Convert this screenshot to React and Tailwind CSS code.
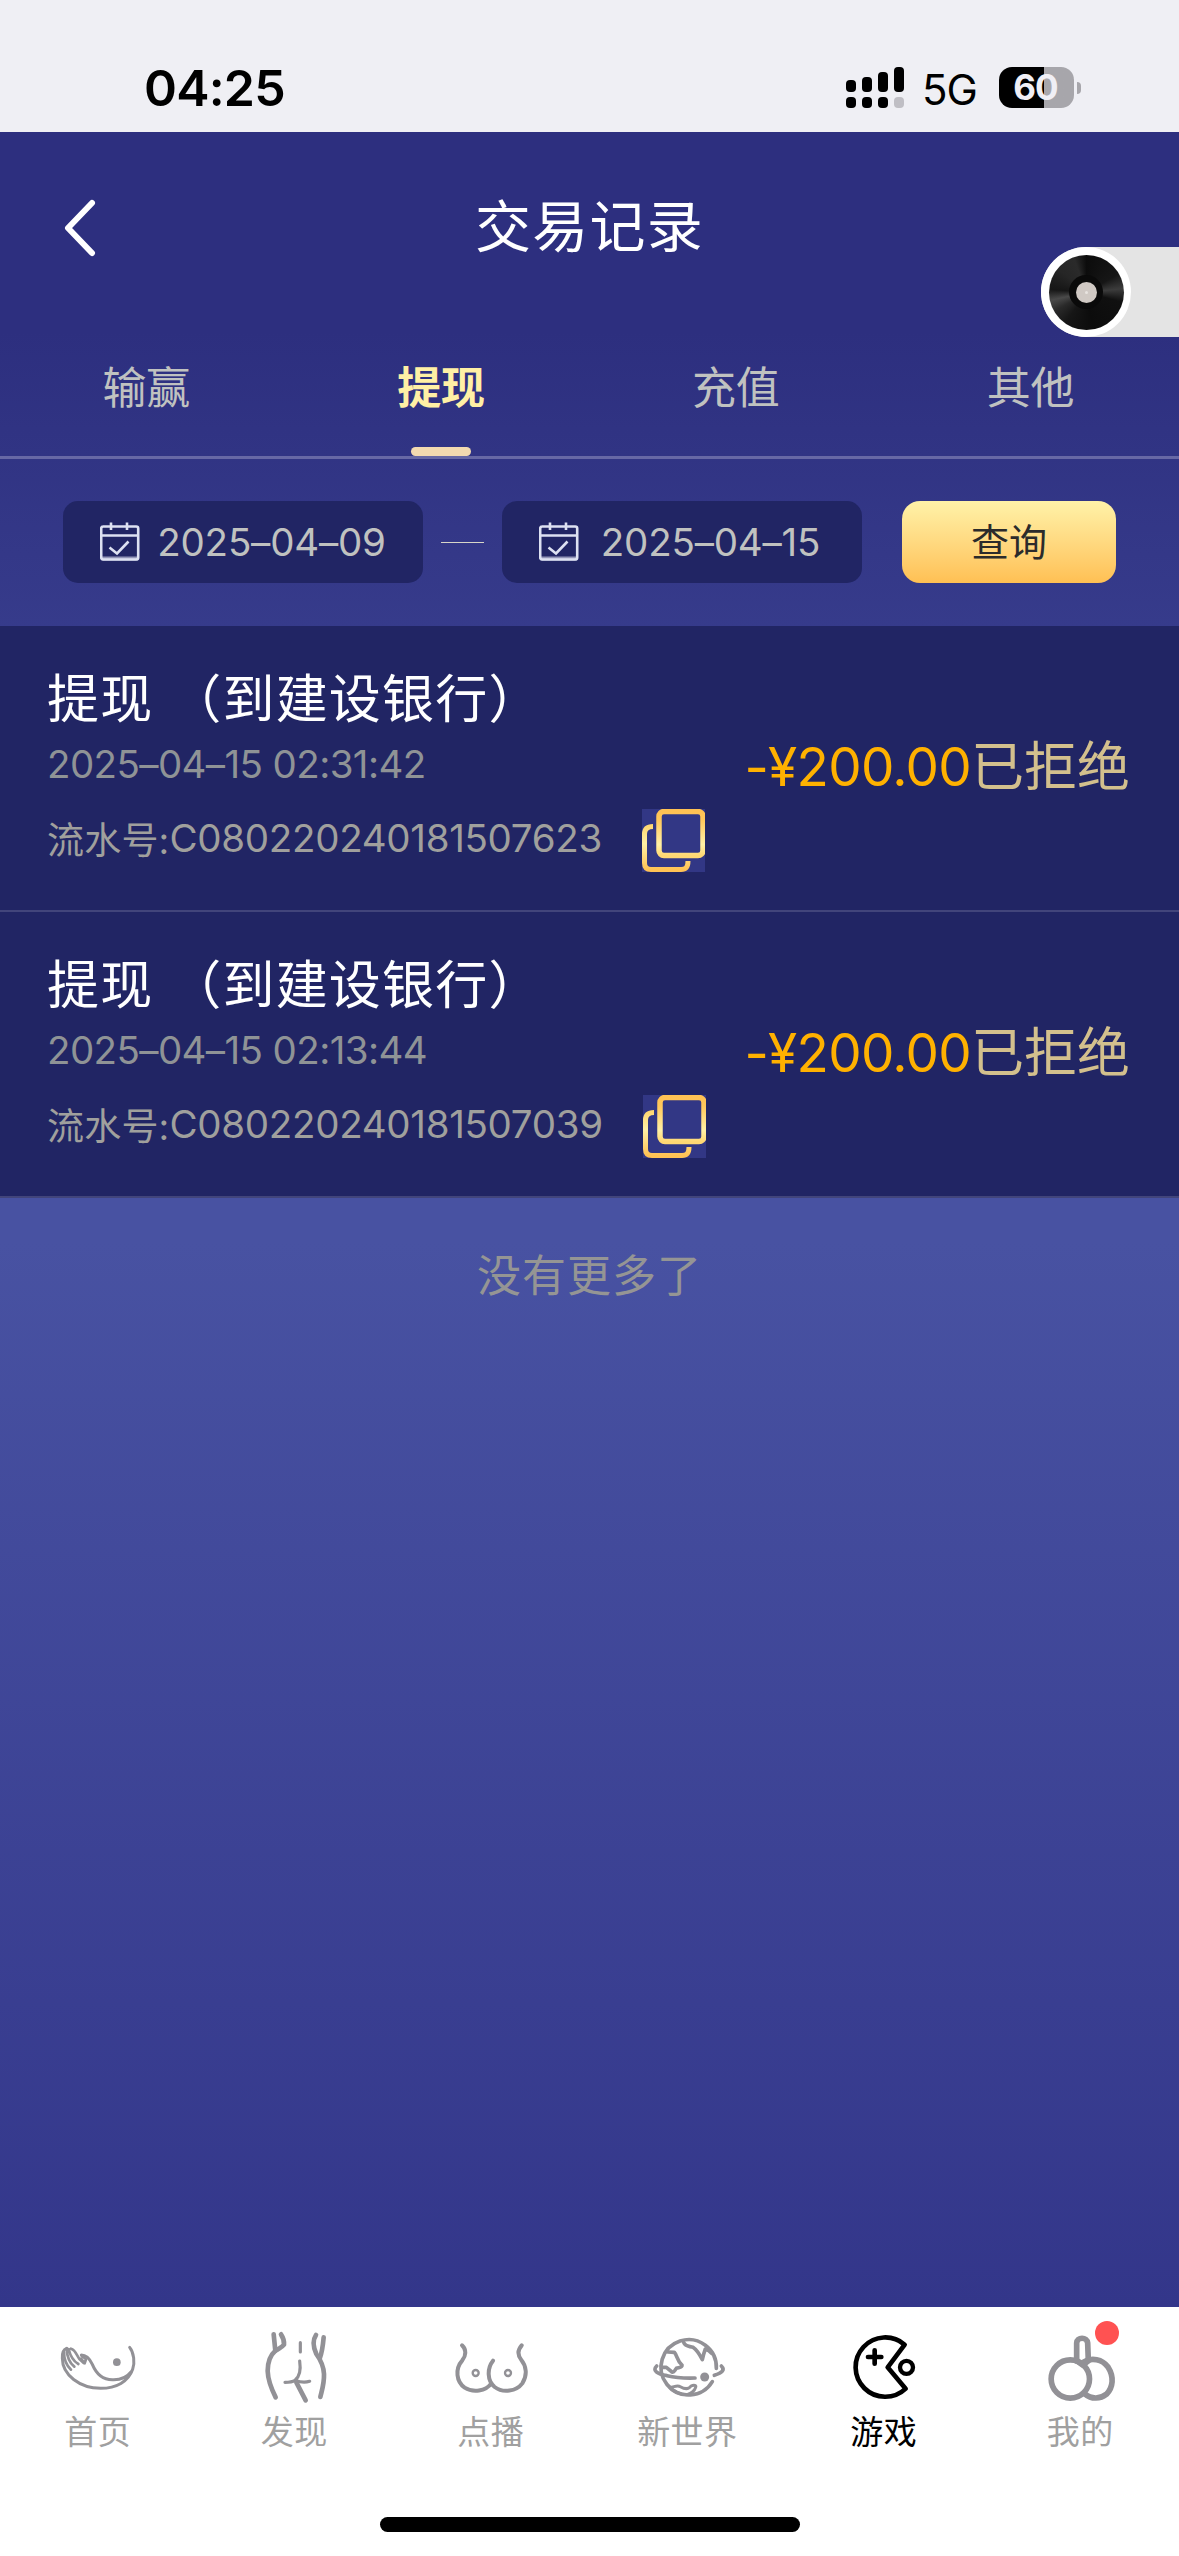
import { useState } from "react"

const tabs = ["输赢", "提现", "充值", "其他"]

const records = [
  { id: "C080220240181507623", title: "提现 （到建设银行）", time: "2025–04–15 02:31:42", amount: "-¥200.00", status: "已拒绝" },
  { id: "C080220240181507039", title: "提现 （到建设银行）", time: "2025–04–15 02:13:44", amount: "-¥200.00", status: "已拒绝" },
]

function HomeIcon() {
  return (
    <svg className="h-20 w-20" viewBox="175 81 240 240" fill="none" stroke="currentColor" strokeWidth="9" strokeLinecap="round" strokeLinejoin="round">
      <path d="M390 142C403 158 406 188 399 208C386 245 350 265 303 265C240 264 188 225 188 175C187 160 190 149 201 145" />
      <path d="M245 165C262 165 270 176 278 193C290 222 312 239 338 239C362 240 382 232 394 216" />
      <path d="M193 156C193 178 201 197 214 209M201 146C202 170 211 190 224 200M207 147C212 168 222 184 236 192M214 146C228 150 231 166 240 178L252 189M246 167L259 178L255 190L244 176" strokeWidth="8" />
      <circle cx="351.500" cy="186.500" r="11.500" fill="currentColor" stroke="none" />
    </svg>
  )
}

function DiscoverIcon() {
  return (
    <svg className="h-20 w-20" viewBox="764 81 240 240" fill="none" stroke="currentColor" strokeWidth="14" strokeLinecap="round" strokeLinejoin="round">
      <path d="M820 103L825 152C809 166 802 190 802 213C803 245 815 270 826 292" />
      <path d="M842 103C848 112 852 122 851 134C845 142 835 145 826 152" />
      <path d="M947 105C937 120 938 140 948 162C961 180 970 197 971 222C972 250 965 270 960 291M970 112C968 135 966 155 958 176" />
      <path d="M900 128V156M898 183C902 210 898 230 884 241C876 246 865 247 854 247M886 241C900 247 915 248 928 244" strokeWidth="9.500" />
      <path d="M888 247L916 301" />
    </svg>
  )
}

function VideoIcon() {
  return (
    <svg className="h-20 w-20" viewBox="154 81 240 240" fill="none" stroke="currentColor" strokeWidth="12" strokeLinecap="round" strokeLinejoin="round">
      <path d="M187 136C202 150 198 168 188 181C165 207 170 245 195 263C220 279 258 274 275 250" />
      <path d="M280 182C262 205 262 242 285 261C310 280 350 274 368 250C384 225 380 198 365 180C353 165 354 150 366 136" />
      <circle cx="228" cy="219" r="9" strokeWidth="7" />
      <circle cx="325" cy="219" r="9" strokeWidth="7" />
    </svg>
  )
}

function WorldIcon() {
  return (
    <svg className="h-20 w-20" viewBox="743 81 240 240" fill="none" stroke="currentColor" strokeWidth="11" strokeLinecap="round" strokeLinejoin="round">
      <path d="M948 205A83 83 0 1 0 936 245" />
      <path d="M769 198C755 212 770 222 800 227C825 233 855 235 884 234M963 198C975 210 966 218 942 226" />
      <path d="M803 156L822 157C832 168 828 180 845 195C846 203 836 202 828 205C822 212 822 218 815 216L798 202L786 202" />
      <path d="M850 127C855 140 865 138 878 142C890 150 896 160 906 179C909 165 912 155 915 147C925 150 930 155 934 160" />
      <path d="M808 262C820 262 830 254 840 260C855 269 865 268 872 258C882 253 888 256 886 262C882 275 872 279 860 284C840 284 820 274 808 262" strokeWidth="9" />
      <circle cx="913" cy="231" r="13.500" fill="currentColor" stroke="none" />
    </svg>
  )
}

function GameIcon() {
  return (
    <svg className="h-20 w-20" viewBox="193 81 240 240" fill="none" stroke="currentColor" strokeWidth="14" strokeLinecap="round" strokeLinejoin="round">
      <path d="M375 134A89 89 0 1 0 378 266L324 202Z" />
      <path d="M265 171H305M285 151V191" />
      <circle cx="380.500" cy="202" r="19.500" strokeWidth="13" />
    </svg>
  )
}

function MineIcon() {
  return (
    <svg className="h-20 w-20" viewBox="782 81 240 240" fill="none" stroke="currentColor" strokeWidth="17" strokeLinecap="round" strokeLinejoin="round">
      <circle cx="870" cy="237" r="57.500" />
      <path d="M889 182V129C889 110 921 110 922 129L924 182" />
      <path d="M908 187C934 171 966 178 983 201C1002 231 998 262 979 282C960 297 934 299 914 282M889 182L908 196L924 182" />
    </svg>
  )
}

const navItems = [
  { label: "首页", Icon: HomeIcon },
  { label: "发现", Icon: DiscoverIcon },
  { label: "点播", Icon: VideoIcon },
  { label: "新世界", Icon: WorldIcon },
  { label: "游戏", Icon: GameIcon },
  { label: "我的", Icon: MineIcon, badge: true },
]

function SignalIcon() {
  return (
    <svg className="h-[41px] w-[58px]" viewBox="0 0 58 41">
      <rect x="0" y="13" width="10" height="12" rx="4" />
      <rect x="16" y="10" width="10" height="15" rx="4" />
      <rect x="32" y="5" width="10" height="20" rx="4" />
      <rect x="48" y="0" width="10" height="25" rx="4" />
      <rect x="0" y="30" width="10" height="11" rx="4" />
      <rect x="16" y="30" width="10" height="11" rx="4" />
      <rect x="32" y="30" width="10" height="11" rx="4" />
      <rect x="48" y="30" width="10" height="11" rx="4" fill="#bfbec4" />
    </svg>
  )
}

function StatusBar() {
  return (
    <div className="flex h-[132px] items-start justify-between bg-[#efeff4] pr-[98px] pl-[144px] text-black">
      <span className="mt-[57px] text-[50px] leading-[62px] font-semibold tracking-[-0.8px]">04:25</span>
      <div className="mt-[67px] flex h-[41px] items-center">
        <SignalIcon />
        <span className="ml-[18px] w-[77px] pt-[4px] text-[42px] leading-[41px] tracking-[-1px]">5G</span>
        <div className="flex h-[41px] w-[75px] items-center justify-center rounded-[13px] bg-linear-to-r from-black from-60% to-[#a7a6ab] to-60% pr-[2px] text-[35px] leading-none font-bold tracking-[-1px] text-[#f0eff5]">
          60
        </div>
        <div className="ml-[3px] h-[12px] w-[4px] rounded-r-full bg-[#a7a6ab]"></div>
      </div>
    </div>
  )
}

function CalendarIcon() {
  return (
    <svg className="h-10 w-10 shrink-0" viewBox="0 0 40 40" fill="none" stroke="#dde1f2" strokeWidth="2.600">
      <rect x="1.200" y="4.500" width="37" height="33" rx="2" />
      <path d="M1 13.500H38M11 .5V8M27 .5V8" />
      <path d="M2 36.500H38" strokeWidth="4" strokeOpacity=".6" />
      <path d="M9.500 25.500L17 31.500L28.500 19.500" />
    </svg>
  )
}

function CopyIcon({ id }) {
  return (
    <svg className="ml-[40px] h-[63px] w-[63px] bg-[#323785]" viewBox="0 0 63 63" fill="none">
      <defs>
        <linearGradient id={`front-${id}`} x1="0" y1="0" x2="0" y2="1">
          <stop offset="0" stopColor="#ffc254" />
          <stop offset=".2" stopColor="#ffc85c" />
          <stop offset=".75" stopColor="#fff0a5" />
          <stop offset="1" stopColor="#ffd873" />
        </linearGradient>
        <linearGradient id={`back-${id}`} x1="0" y1="0" x2="0" y2="1">
          <stop offset="0" stopColor="#ffd873" />
          <stop offset=".4" stopColor="#fff0a5" />
          <stop offset="1" stopColor="#ffc254" />
        </linearGradient>
      </defs>
      <path d="M11 17.500C5 17.500 2.500 20 2.500 25V54C2.500 58.500 5 60.500 9 60.500H39C44 60.500 46 58 46 52" stroke={`url(#back-${id})`} strokeWidth="5" />
      <rect x="17" y="2.500" width="44" height="44" rx="5" stroke={`url(#front-${id})`} strokeWidth="5.500" />
    </svg>
  )
}

function DateField({ value }) {
  return (
    <div className="flex h-[82px] w-[360px] items-center rounded-[15px] bg-[#212564] pl-[37px]">
      <CalendarIcon />
      <span className="flex-1 pr-[20px] text-center text-[38.5px] leading-none tracking-[-0.2px] text-[#c0c2c0]">{value}</span>
    </div>
  )
}

function VinylButton() {
  return (
    <div className="absolute top-[247px] right-0 h-[90px] w-[138px] rounded-l-full bg-[#e4e4e4]">
      <div className="flex h-[90px] w-[90px] items-center justify-center rounded-full bg-white">
        <div className="flex h-[75px] w-[75px] items-center justify-center rounded-full bg-[conic-gradient(#0c0c0c,#161616_60deg,#3c3c3c_84deg,#101010_105deg,#0c0c0c_170deg,#161616_215deg,#2a2a2a_240deg,#4a4a4a_258deg,#161616_275deg,#262626_310deg,#2a2a2a_340deg,#0c0c0c)]">
          <div className="flex h-[34px] w-[34px] items-center justify-center rounded-full bg-[#0a0a0a]">
            <div className="flex h-[21px] w-[21px] items-center justify-center rounded-full bg-[#d0c9c4]">
              <div className="h-[3px] w-[3px] rounded-full bg-[#e8e4e0]"></div>
            </div>
          </div>
        </div>
      </div>
    </div>
  )
}

function RecordRow({ record }) {
  return (
    <div className="flex h-[286px] items-start justify-between border-b-2 border-[#42457b] bg-[#212564] pr-[49px] pl-[47px]">
      <div className="pt-[43px]">
        <p className="h-[62px] text-[52px] leading-[62px] tracking-[1.2px] whitespace-pre text-white">{record.title}</p>
        <p className="mt-[9px] h-[48px] text-[38.5px] leading-[48px] tracking-[-0.6px] text-[#8f9396]">{record.time}</p>
        <div className="mt-[21px] flex h-[63px] items-center text-[#a0a09d]">
          <span className="text-[37px] leading-[48px] tracking-[0.2px]">流水号:</span>
          <span className="pb-[5px] text-[38.5px] leading-[48px] tracking-[-0.3px]">{record.id}</span>
          <CopyIcon id={record.id} />
        </div>
      </div>
      <div className="flex h-full items-center text-[53px]">
        <span className="tracking-[-0.7px] text-[#ffb100]">{record.amount}</span>
        <span className="text-[#d3c08d]">{record.status}</span>
      </div>
    </div>
  )
}

export default function App() {
  const [activeTab, setActiveTab] = useState("提现")

  return (
    <div className="relative flex h-[2556px] w-[1179px] flex-col overflow-hidden bg-white font-['Inter','Noto_Sans_CJK_SC',sans-serif]">
      <StatusBar />

      <main className="flex h-[2175px] flex-col bg-[linear-gradient(180deg,#2d2f7f_0px,#2d2f7f_200px,#4852a2_1060px,#4852a2_1110px,#33368a_2175px)]">
        {/* Header */}
        <header className="grid h-[190px] grid-cols-[1fr_auto_1fr] items-center">
          <button className="ml-[62px] h-[60px] w-[36px]">
            <svg className="h-[60px] w-[36px]" viewBox="0 0 36 60" fill="none" stroke="white" strokeWidth="6" strokeLinecap="round" strokeLinejoin="round">
              <path d="M30 6L6 31L30 56" />
            </svg>
          </button>
          <h1 className="text-[56px] leading-[70px] tracking-[1.2px] text-white">交易记录</h1>
        </header>

        {/* Tabs */}
        <nav className="grid h-[137px] grid-cols-4 border-b-[3px] border-[#6768a5]">
          {tabs.map((tab) => (
            <button key={tab} onClick={() => setActiveTab(tab)} className="flex flex-col items-center justify-between pt-[36px] pr-[2px]">
              <span className={tab === activeTab ? "text-[44px] leading-[60px] font-bold text-[#fff0a5]" : "text-[44px] leading-[60px] text-[#c0c2c0]"}>
                {tab}
              </span>
              {tab === activeTab && <span className="h-[9px] w-[60px] rounded-[5px] bg-[#f3dab0]"></span>}
            </button>
          ))}
        </nav>

        {/* Date filter */}
        <div className="flex h-[167px] shrink-0 items-start px-[63px] pt-[42px]">
          <DateField value="2025–04–09" />
          <div className="mx-[18px] mt-[41px] h-px w-[43px] bg-[#d8d6c8]"></div>
          <DateField value="2025–04–15" />
          <button className="ml-[40px] h-[82px] w-[214px] rounded-[18px] bg-linear-to-b from-[#fff2a8] to-[#ffc053] text-[38px] leading-[82px] text-[#2b2b2b]">
            查询
          </button>
        </div>

        {/* Records */}
        {records.map((record) => (
          <RecordRow key={record.id} record={record} />
        ))}
        <p className="mt-[46px] text-center text-[44px] leading-[64px] tracking-[1px] text-[#959594]">没有更多了</p>
      </main>

      {/* Bottom navigation */}
      <footer className="flex h-[249px] flex-col items-center bg-white">
        <div className="grid h-[210px] w-full grid-cols-6">
          {navItems.map(({ label, Icon, badge }) => (
            <button key={label} className="relative flex flex-col items-center pt-[20px] text-[#929196]">
              <span className={label === "游戏" ? "text-black" : ""}>
                <Icon />
              </span>
              <span className={label === "游戏" ? "mt-[5px] pr-px text-[33px] leading-[40px] tracking-[0.4px] text-black" : "mt-[5px] pr-px text-[33px] leading-[40px] tracking-[0.4px] text-[#a0a0a0]"}>
                {label}
              </span>
              {badge && <span className="absolute top-[14px] left-[112px] h-6 w-6 rounded-full bg-[#ff5252]"></span>}
            </button>
          ))}
        </div>
        <div className="h-[15px] w-[420px] rounded-full bg-black"></div>
      </footer>

      <VinylButton />
    </div>
  )
}
